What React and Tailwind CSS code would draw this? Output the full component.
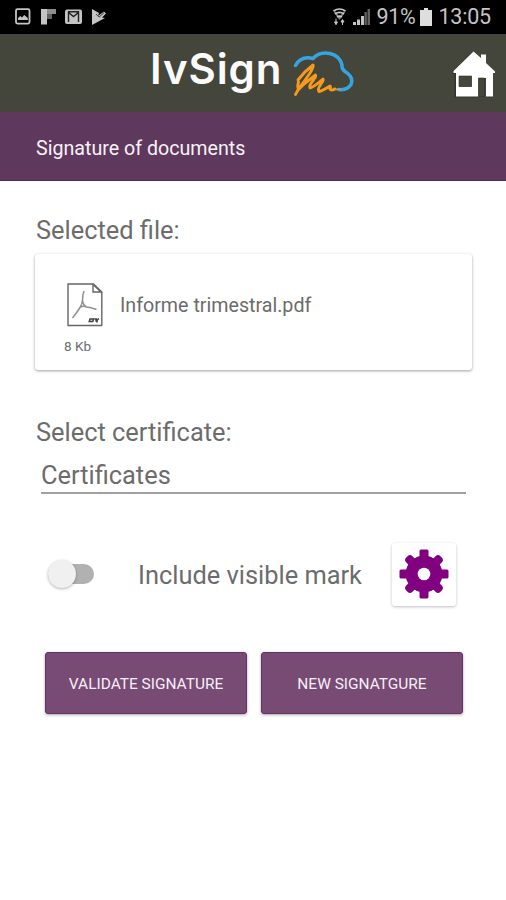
import React from "react";

function StatusBar() {
  return (
    <header className="flex h-[34px] items-center justify-between bg-black pl-[15px] pr-[15px] text-[#c4c4c4]">
      <svg width="94" height="18" viewBox="15 8 94 18" fill="#c4c4c4">
        <rect x="16" y="9.2" width="13.5" height="14.4" rx="1.5" fill="none" stroke="#c4c4c4" strokeWidth="1.8" />
        <path d="M18 20v-2l2.3-2 1.7 1.5 2.2-2.5 3.6 3v2z" />
        <path d="M41 9h6v15.500h-6z" />
        <path d="M47 9h9v5h-9z" opacity=".72" />
        <path d="M47 14h5v5h-5z" opacity=".5" />
        <rect x="65" y="9.500" width="17" height="14.500" rx="2" />
        <path d="M68.500 22v-9.500l5 4 5-4V22M68 11.800h11" fill="none" stroke="#222" strokeWidth="1.400" />
        <path d="M92 9l7 4-1 3 6-4.500 2 2-4 4 3 .5L92 25z" />
        <path d="M96 14l3 3.200 5-4.500" fill="none" stroke="#222" strokeWidth=".8" />
      </svg>
      <div className="flex items-center">
        <svg className="mr-[5px]" width="39" height="20" viewBox="332 7 39 20" fill="#c4c4c4">
          <g fill="none" stroke="#c4c4c4" strokeWidth="1.600">
            <path d="M333.500 11q6-4 12 0M335 14q4.500-3.200 9 0M337 17q2.500-1.800 5 0" />
          </g>
          <path d="M333.500 11.500L339.500 20l6-8.500-2 0-4 5.500-4-5.500z" opacity=".7" />
          <path d="M336 18.500v6M334.500 22l1.500 2.500 1.500-2.500zM342.500 25v-5M341 22l1.500-2.500 1.500 2.500z" stroke="#c4c4c4" strokeWidth="1" />
          <path d="M353 22h3v3h-3zM357 19.500h3V25h-3zM361 16h3v9h-3z" />
          <path d="M364.500 12h2.300v13h-2.300zM367.500 9h2.500v16h-2.500z" opacity=".5" />
        </svg>
        <span className="w-[43px] whitespace-nowrap text-[21.500px] leading-[34px] tracking-[-0.300px]">91%</span>
        <svg className="ml-px mr-[6px]" width="12" height="18" viewBox="0 0 12 18" fill="#dedede">
          <path d="M4 0h4v2h4v16H0V2h4z" />
        </svg>
        <span className="text-[21.500px] leading-[34px] tracking-[-0.200px]">13:05</span>
      </div>
    </header>
  );
}

function LogoMark() {
  return (
    <svg width="62" height="48" viewBox="293 50 62 48" fill="none" strokeLinecap="round" strokeLinejoin="round">
      <path d="M295.500 65.500Q301 55.500 313 58.500Q319 51.500 330 53.500Q340 56 342 65Q341.500 69 345 71.500Q354 77 351 84.500Q347 90.500 339 89.500" stroke="#36a5df" strokeWidth="3.500" />
      <path d="M340 89.500q-4 .2-6-1" stroke="#a39a75" strokeWidth="2" />
      <path d="M298 80q7-9 15-15q1.500 1-3 8q-6 9-11.500 16q-1.500-2 0-7M295.500 94.500q2-5 7-9q7-6 13-10.500q1 1-2 5q-5 6-3.500 8q4-1 13-9q1 1-2 5q-4 6-2 7.500q4-1 11-5.500q1 .5 0 3q1 2 5 0" stroke="#f59a1b" strokeWidth="2.900" />
    </svg>
  );
}

function HomeIcon() {
  return (
    <svg width="46" height="50" viewBox="450 49 46 50">
      <path d="M472 52L453 71v2.500h2V97h24V79h8v18h6V73l-6-10z" fill="#25261f" transform="translate(-.6 .5)" opacity=".5" />
      <path fillRule="evenodd" d="M473.500 51.500L453.500 71v2H456v23.500h22.500V78h7.500v18.500h7V73h2v-1.500L486 63v-8.500h-5V58zM459 76h12.500v10.500H459z" fill="#fff" />
      <path d="M459 76h12.500v10.500H459zM478.500 78h6v18.500h-6z" fill="#44453b" stroke="#33342c" strokeWidth=".6" />
    </svg>
  );
}

function PdfIcon() {
  return (
    <svg width="36" height="44" viewBox="67 283 36 44" fill="none" stroke="#666">
      <path d="M68 284h25.500l8.300 8v33.500H68z" strokeWidth="1.400" strokeLinejoin="round" />
      <path d="M93 284.500v7.500h8z" strokeWidth="1.400" />
      <path d="M84 291q-1.500 4-1.500 9-.2 4-2.500 7.500-3 5-7.500 10.500M82.500 300q.5 5 4 7 4 .3 10 2.500M80 307.500q3-2 6.500-.5" stroke="#909090" strokeWidth="1.500" />
      <path d="M90 319h3.500l-.7 2.500h-3.500zM94.500 319h2l-.7 2.500M97.500 319l-.7 3.500M98 319h1" stroke="#444" strokeWidth="1.600" />
    </svg>
  );
}

function GearIcon() {
  return (
    <svg width="50" height="50" viewBox="-25 -25 50 50" fill="#800080">
      <circle r="18.400" />
      {[0, 90, 180, 270].map((angle) => (
        <rect key={angle} x="-4.500" y="-24.500" width="9" height="12" rx="1.500" transform={`rotate(${angle})`} />
      ))}
      {[45, 135, 225, 315].map((angle) => (
        <rect key={angle} x="-4.400" y="-24.200" width="8.800" height="12" rx="3.500" transform={`rotate(${angle})`} />
      ))}
      <circle r="6.300" fill="#fff" />
    </svg>
  );
}

function ActionButton({ children }) {
  return (
    <button className="h-[62px] w-[202px] rounded-[3px] border border-[#66316b] bg-[#784b75] pt-[3px] text-[15.450px] text-[#f7eff6] shadow-[0_1px_3px_rgba(0,0,0,0.35)]">
      {children}
    </button>
  );
}

export default function App() {
  return (
    <div className="h-[900px] w-[506px] overflow-hidden bg-white font-['Roboto',sans-serif] text-[#6c6c6c]">
      <StatusBar />
      <div className="flex h-[78px] items-start bg-[#44453b]">
        <div className="ml-[150px] mt-[9px] w-[143px] whitespace-nowrap font-['Inter',sans-serif] text-[42px] font-semibold leading-[52px] tracking-[0.900px] text-[#fafafa]">IvSign</div>
        <div className="mt-4"><LogoMark /></div>
        <div className="ml-[95px] mt-[15px]"><HomeIcon /></div>
      </div>
      <div className="flex h-[69px] items-center border-b border-[#54304f] bg-[#5f385d] pl-9 pt-[6px] text-[19.650px] text-[#f7f2f7]">
        <h1>Signature of documents</h1>
      </div>

      <main className="px-[35px] pt-[33px]">
        <h2 className="pl-px text-[25.400px] leading-[32px]">Selected file:</h2>
        <section className="mt-[8px] h-[116px] w-[437px] rounded-[3px] bg-white px-[29px] pt-[29px] shadow-[0_1px_3px_rgba(0,0,0,0.38)]">
          <div className="flex items-center">
            <div className="ml-[3px]"><PdfIcon /></div>
            <span className="ml-[17px] pt-[2px] text-[19.650px]">Informe trimestral.pdf</span>
          </div>
          <p className="mt-[9px] text-[13.500px] leading-[20px]">8 Kb</p>
        </section>

        <h2 className="mt-[46px] pl-px text-[25.400px] leading-[32px]">Select certificate:</h2>
        <div className="ml-[6px] mt-[11px] h-[35px] w-[425px] border-b-2 border-[#a0a0a0] text-[25.400px] leading-[32px]">Certificates</div>

        <div className="mt-[48px] flex h-[64px] items-center">
          <div className="ml-[13px] flex h-[29px] w-[46px] items-center">
            <div className="flex h-5 w-[46px] items-center rounded-full bg-[#b1b1b1]">
              <div className="h-[28px] w-[28px] shrink-0 rounded-full bg-[#f0f0f0] shadow-[0_1px_3px_rgba(0,0,0,0.3)]" />
            </div>
          </div>
          <span className="ml-[44px] w-[254px] whitespace-nowrap pt-[2px] text-[25.400px]">Include visible mark</span>
          <button aria-label="Mark settings" className="flex h-[63px] w-[64px] items-center justify-center rounded-[3px] bg-white shadow-[0_1px_3px_rgba(0,0,0,0.25)]">
            <GearIcon />
          </button>
        </div>

        <div className="ml-[10px] mt-[46px] flex gap-[14px]">
          <ActionButton>VALIDATE SIGNATURE</ActionButton>
          <ActionButton>NEW SIGNATGURE</ActionButton>
        </div>
      </main>
    </div>
  );
}
